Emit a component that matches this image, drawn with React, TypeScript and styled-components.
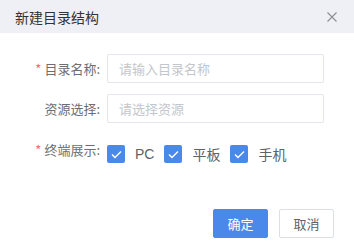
import React, { FC } from "react";
import styled, { createGlobalStyle } from "styled-components";

const GlobalStyle = createGlobalStyle`
    html, body {
        margin: 0;
        padding: 0;
        background: #fff;
    }
    body {
        font-family: "Noto Sans CJK SC", "Liberation Sans", sans-serif;
    }
`

const BLUE = "#4a89ea";

const Dialog = styled.div`
    width: 354px;
    height: 249px;
    background: #fff;
    display: flex;
    flex-direction: column;
    box-sizing: border-box;
`

const Header = styled.div`
    height: 33px;
    background: #eff0f5;
    display: flex;
    align-items: center;
    justify-content: space-between;
    padding: 0 17px 0 15px;
`

const Title = styled.span`
    font-size: 14px;
    color: #333;
    line-height: 1;
`

const CloseButton = styled.button`
    border: none;
    background: none;
    padding: 0;
    width: 10px;
    height: 10px;
    display: flex;
    cursor: pointer;
`

const Body = styled.div`
    display: flex;
    flex-direction: column;
    gap: 11px;
    padding: 21px 30px 0 20px;
`

interface RowProps {
    top?: boolean;
}

const Row = styled.div<RowProps>`
    display: flex;
    align-items: ${p => p.top ? "flex-start" : "center"};
    gap: 7px;
`

const Label = styled.label<RowProps>`
    width: 80px;
    flex-shrink: 0;
    text-align: right;
    font-size: 13px;
    color: #6b6e73;
    white-space: nowrap;
    margin-top: ${p => p.top ? "6px" : "0"};
`

const Star = styled.span`
    color: #f56c6c;
    margin-right: 3px;
`

const Input = styled.input`
    flex: 1;
    height: 29px;
    box-sizing: border-box;
    border: 1px solid #e4e6eb;
    border-radius: 2px;
    padding: 0 11px;
    font-family: inherit;
    font-size: 13px;
    color: #606266;
    outline: none;

    &::placeholder {
        color: #c3c6cc;
    }
`

const CheckGroup = styled.div`
    display: flex;
    align-items: center;
    padding-top: 10px;
`

const CheckItem = styled.label`
    display: flex;
    align-items: center;
    gap: 10px;
    margin-right: 10px;
    font-size: 14px;
    color: #606266;
    font-family: "Liberation Sans", "Noto Sans CJK SC", sans-serif;
`

const Box = styled.span`
    width: 18px;
    height: 18px;
    border-radius: 2px;
    background: ${BLUE};
    display: flex;
    align-items: center;
    justify-content: center;
`

const Footer = styled.div`
    margin-top: auto;
    display: flex;
    justify-content: flex-end;
    gap: 11px;
    padding: 0 20px 11px 0;
`

interface ButtonProps {
    primary?: boolean;
}

const Button = styled.button<ButtonProps>`
    width: 55px;
    height: 29px;
    box-sizing: border-box;
    border-radius: 2px;
    font-family: "Noto Sans CJK SC", sans-serif;
    font-size: 13px;
    cursor: pointer;
    border: 1px solid ${p => p.primary ? BLUE : "#dcdfe6"};
    background: ${p => p.primary ? BLUE : "#fff"};
    color: ${p => p.primary ? "#fff" : "#606266"};
`

const Check: FC<{ label: string }> = ({ label }) => (
    <CheckItem>
        <Box>
            <svg width="11" height="9" viewBox="0 0 11 9">
                <path d="M1 4.5 L4 7.5 L10 1.5" fill="none" stroke="#fff" strokeWidth="1.4" />
            </svg>
        </Box>
        {label}
    </CheckItem>
);

const App: FC = () => (
    <>
        <GlobalStyle />
        <Dialog>
            <Header>
                <Title>新建目录结构</Title>
                <CloseButton>
                    <svg width="10" height="10" viewBox="0 0 10 10">
                        <path d="M0.5 0.5 L9.5 9.5 M9.5 0.5 L0.5 9.5" stroke="#8a8d93" strokeWidth="1.1" />
                    </svg>
                </CloseButton>
            </Header>
            <Body>
                <Row>
                    <Label><Star>*</Star>目录名称:</Label>
                    <Input placeholder="请输入目录名称" />
                </Row>
                <Row>
                    <Label>资源选择:</Label>
                    <Input placeholder="请选择资源" />
                </Row>
                <Row top>
                    <Label top><Star>*</Star>终端展示:</Label>
                    <CheckGroup>
                        <Check label="PC" />
                        <Check label="平板" />
                        <Check label="手机" />
                    </CheckGroup>
                </Row>
            </Body>
            <Footer>
                <Button primary>确定</Button>
                <Button>取消</Button>
            </Footer>
        </Dialog>
    </>
);

export default App;
